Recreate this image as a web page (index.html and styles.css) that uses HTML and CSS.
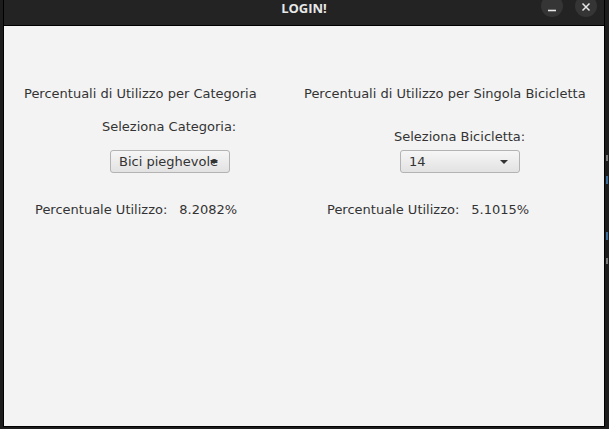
FILE: index.html
```html
<!DOCTYPE html>
<html lang="it">
<head>
<meta charset="utf-8">
<title>LOGIN!</title>
<link rel="stylesheet" href="styles.css">
</head>
<body>
<div class="desktop">
  <div class="window">
    <div class="titlebar">
      <span class="title">LOGIN!</span>
      <div class="controls">
        <span class="ctl ctl-min"><svg width="10" height="10" viewBox="0 0 10 10"><path d="M1 8.5H9" stroke="#e6e6e6" stroke-width="1.6"/></svg></span>
        <span class="ctl ctl-close"><svg width="10" height="10" viewBox="0 0 10 10"><path d="M1.5 1.5L8.5 8.5M8.5 1.5L1.5 8.5" stroke="#e6e6e6" stroke-width="1.5"/></svg></span>
      </div>
    </div>
    <div class="content">
      <div class="col col-left">
        <div class="lbl head">Percentuali di Utilizzo per Categoria</div>
        <div class="lbl sel">Seleziona Categoria:</div>
        <div class="combo"><span class="combo-text">Bici pieghevole</span><span class="arrow"></span></div>
        <div class="lbl pct"><span>Percentuale Utilizzo:</span><span class="val">8.2082%</span></div>
      </div>
      <div class="col col-right">
        <div class="lbl head">Percentuali di Utilizzo per Singola Bicicletta</div>
        <div class="lbl sel">Seleziona Bicicletta:</div>
        <div class="combo"><span class="combo-text">14</span><span class="arrow"></span></div>
        <div class="lbl pct"><span>Percentuale Utilizzo:</span><span class="val">5.1015%</span></div>
      </div>
    </div>
  </div>
  <div class="behind">
    <span class="mark g1"></span>
    <span class="mark b1"></span>
    <span class="mark b2"></span>
    <span class="mark g2"></span>
  </div>
</div>
</body>
</html>
```
FILE: styles.css
```css
html, body {
  margin: 0;
  padding: 0;
  background: #1c1c1c;
  width: 609px;
  height: 429px;
  overflow: hidden;
}
.desktop {
  position: relative;
  width: 609px;
  height: 429px;
  display: flex;
  align-items: flex-start;
}
.window {
  margin-left: 3px;
  width: 600px;
  height: 426px;
  border: 1px solid #000;
  border-top: none;
  display: flex;
  flex-direction: column;
  background: #f3f3f3;
}
.titlebar {
  position: relative;
  height: 25px;
  background: #232323;
  border-bottom: 1px solid #000;
  display: flex;
  justify-content: center;
  flex-shrink: 0;
}
.title {
  font-family: "Open Sans", "DejaVu Sans", sans-serif;
  font-weight: 700;
  font-size: 13px;
  line-height: 16px;
  color: #e8e8e8;
}
.controls {
  position: absolute;
  right: 7px;
  top: -5px;
  display: flex;
  gap: 12px;
}
.ctl {
  width: 22px;
  height: 22px;
  border-radius: 50%;
  background: #353535;
  display: flex;
  align-items: center;
  justify-content: center;
}
.ctl-min svg { margin-top: 2px; }
.ctl-close svg { margin-top: 1px; }
.content {
  flex: 1;
  display: flex;
  font-family: "DejaVu Sans", sans-serif;
  font-size: 13px;
  color: #333;
}
.col {
  width: 300px;
  display: flex;
  flex-direction: column;
  align-items: flex-start;
}
.lbl {
  line-height: 16px;
  white-space: nowrap;
}
.head { margin-top: 60px; }
.col-left .head { margin-left: 20px; }
.col-right .head { margin-left: 0; }
.col-left .sel { margin-top: 17px; margin-left: 98px; }
.col-right .sel { margin-top: 27px; margin-left: 90px; }
.combo {
  position: relative;
  box-sizing: border-box;
  width: 120px;
  height: 23px;
  border: 1px solid #b3b3b3;
  border-radius: 3px;
  background: linear-gradient(#f6f6f6, #e2e2e2);
  display: flex;
  align-items: center;
  padding-left: 8px;
  font-size: 13px;
  color: #333;
  overflow: hidden;
  white-space: nowrap;
}
.col-left .combo { margin-top: 15px; margin-left: 106px; }
.col-right .combo { margin-top: 5px; margin-left: 96px; }
.arrow {
  position: absolute;
  right: 11px;
  top: 9px;
  width: 0;
  height: 0;
  border-left: 4px solid transparent;
  border-right: 4px solid transparent;
  border-top: 4px solid #333;
}
.pct { margin-top: 29px; display: flex; gap: 12px; }
.col-left .pct { margin-left: 31px; }
.col-right .pct { margin-left: 23px; }
.behind {
  position: absolute;
  left: 605px;
  top: 150px;
  width: 4px;
  height: 120px;
}
.mark { position: absolute; left: 1px; width: 2px; }
.g1 { top: 5px; height: 6px; background: #7a7a7a; }
.b1 { top: 26px; height: 8px; background: #3f6f9c; }
.b2 { top: 82px; height: 8px; background: #3f6f9c; }
.g2 { top: 108px; height: 6px; background: #7a7a7a; }
```
